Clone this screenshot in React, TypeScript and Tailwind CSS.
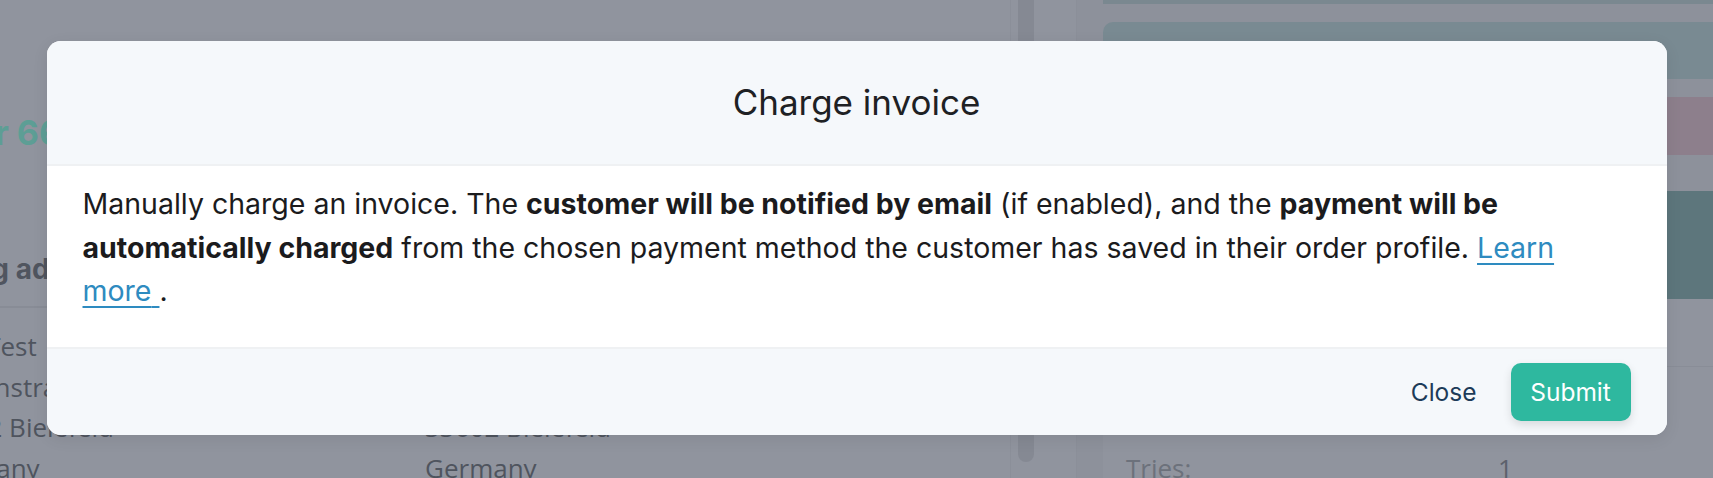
import React from "react";

function BackgroundPage() {
  return (
    <div className="flex h-full w-full bg-[#90949e]">
      {/* Left content column (clipped by viewport) */}
      <div className="relative w-[1010px] shrink-0 overflow-hidden">
        <div className="ml-[-86px] pt-[111px] text-[34px] font-bold leading-[44px] text-[#5d9e95]">
          Order 6601
        </div>
        <div className="ml-[-75px] mt-[93px] flex text-[28px] font-bold text-[#50555f]">
          <span>Billing address</span>
        </div>
        <div className="mt-[16px] h-[2px] w-[930px] bg-[#888c96]" />
        <div className="ml-[-72px] mt-[18px] grid grid-cols-[497px_1fr] text-[26px] leading-[40.5px] text-[#4f545e]" style={{ fontFamily: '"Open Sans", sans-serif' }}>
          <div>
            <div>Max Test</div>
            <div>Lindenstraße 12</div>
            <div>33602 Bielefeld</div>
            <div>Germany</div>
          </div>
          <div>
            <div>Max Test</div>
            <div>Lindenstraße 12</div>
            <div>33602 Bielefeld</div>
            <div>Germany</div>
          </div>
        </div>
      </div>

      {/* Scrollbar */}
      <div className="w-[67px] shrink-0 border-x border-[#8b8f99] pl-[7px]">
        <div className="h-[462px] w-[16px] rounded-b-full bg-[#858993]" />
      </div>

      {/* Right panel */}
      <div className="flex-1 bg-[#8d919b] pl-[26px]">
        <div className="h-[4px] bg-[#7a8890]" />
        <div className="mt-[18px] h-[57px] rounded-tl-[10px] bg-[#798a92]" />
        <div className="mt-[18px] h-[58px] bg-[#8d7f8c]" />
        <div className="mt-[36px] h-[108px] bg-[#5d767c]" />
        <div className="bg-[#90949e]">
          <div className="h-[68px] border-b border-[#898d97]" />
          <div className="flex pl-[23px] pt-[86px] text-[26px] leading-[30px] text-[#6c717b]" style={{ fontFamily: '"Open Sans", sans-serif' }}>
            <span className="w-[372px]">Tries:</span>
            <span className="text-[#5c616b]">1</span>
          </div>
        </div>
      </div>
    </div>
  );
}

export default function App() {
  return (
    <div className="relative h-[478px] w-full overflow-hidden" style={{ fontFamily: "Inter, sans-serif" }}>
      <BackgroundPage />

      {/* Modal */}
      <div className="absolute inset-0 flex justify-center pt-[41px]">
        <div className="flex h-[394px] w-[1620px] flex-col overflow-hidden rounded-[14px] bg-white shadow-[0_4px_16px_rgba(0,0,0,0.08)]">
          <div className="flex h-[125px] shrink-0 items-center justify-center border-b-2 border-[#eff1f3] bg-[#f5f8fb]">
            <h2 className="text-[35px] font-normal text-[#1e2124]">Charge invoice</h2>
          </div>

          <div className="flex-1 bg-white pl-[36px] pr-[60px] pt-[16px] text-[28.5px] leading-[43.5px] text-[#1b1b1d]">
            <p>
              Manually charge an invoice. The <b className="font-bold">customer will be notified by email</b> (if
              enabled), and the <b className="font-bold">payment will be automatically charged</b> from the chosen
              payment method the customer has saved in their order profile.{" "}
              <a href="#" className="text-[#2e8bc0] underline underline-offset-[5px]">
                Learn more{" "}
              </a>
              .
            </p>
          </div>

          <div className="flex h-[88px] shrink-0 items-center justify-end gap-[34px] border-t-2 border-[#eff1f3] bg-[#f5f8fb] pr-[36px]">
            <button className="text-[24.5px] text-[#1c3b58]">Close</button>
            <button className="h-[58px] w-[120px] rounded-[10px] bg-[#2eb89f] text-[24.5px] text-white shadow-[0_4px_10px_rgba(0,0,0,0.12)]">
              Submit
            </button>
          </div>
        </div>
      </div>
    </div>
  );
}
